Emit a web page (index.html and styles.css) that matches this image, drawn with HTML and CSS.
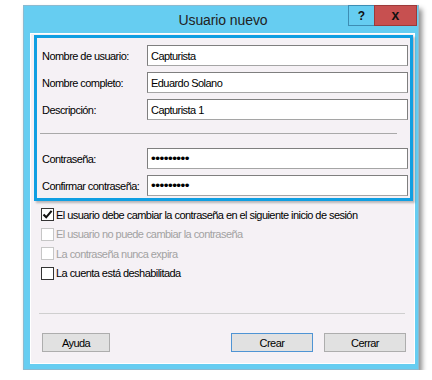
FILE: index.html
```html
<!DOCTYPE html>
<html lang="es">
  <head>
    <meta charset="utf-8">
    <title>Usuario nuevo</title>
    <link rel="stylesheet" href="styles.css">
  </head>
  <body>
    <div class="window">
      <div class="titlebar">
        <span class="title">Usuario nuevo</span>
        <div class="controls">
          <span class="ctl help">?</span>
          <span class="ctl close">x</span>
        </div>
      </div>
      <div class="client">
        <div class="userbox">
          <div class="fields">
            <label>Nombre de usuario:</label>
            <input type="text" value="Capturista" readonly>
            <label>Nombre completo:</label>
            <input type="text" value="Eduardo Solano" readonly>
            <label>Descripción:</label>
            <input type="text" value="Capturista 1" readonly>
          </div>
          <div class="divider"></div>
          <div class="fields">
            <label>Contraseña:</label>
            <input class="pass" type="password" value="123456789" readonly>
            <label>Confirmar contraseña:</label>
            <input class="pass" type="password" value="123456789" readonly>
          </div>
        </div>
        <ul class="options">
          <li>
            <span class="box">
              <svg width="11" height="11" viewBox="0 0 11 11"><path d="M1.5 5.5 L4.2 8.3 L9.6 1.8" fill="none" stroke="#111" stroke-width="2.1"/></svg>
            </span>
            El usuario debe cambiar la contraseña en el siguiente inicio de sesión
          </li>
          <li class="disabled"><span class="box"></span>El usuario no puede cambiar la contraseña</li>
          <li class="disabled"><span class="box"></span>La contraseña nunca expira</li>
          <li><span class="box"></span>La cuenta está deshabilitada</li>
        </ul>
        <div class="separator"></div>
        <div class="buttons">
          <button class="btn help-btn">Ayuda</button>
          <span class="spacer"></span>
          <button class="btn default">Crear</button>
          <button class="btn">Cerrar</button>
        </div>
      </div>
    </div>
  </body>
</html>
```

FILE: styles.css
```css
body {
  margin: 0;
  padding: 5px 0 0 23px;
  background: #ffffff;
  font-family: "Liberation Sans", Arial, sans-serif;
  font-size: 11px;
  letter-spacing: -0.55px;
  color: #000;
}

.window {
  box-sizing: border-box;
  width: 396px;
  height: 365px;
  display: flex;
  flex-direction: column;
  background: #66cdf1;
  border: 1px solid #8bbad0;
  box-shadow: 3px 4px 5px rgba(0, 0, 0, 0.45);
}

.titlebar {
  height: 27px;
  display: grid;
}

.title,
.controls {
  grid-area: 1 / 1;
}

.title {
  justify-self: center;
  align-self: center;
  margin-left: 4px;
  font-size: 14px;
  letter-spacing: -0.1px;
  color: #222;
}

.controls {
  justify-self: end;
  align-self: start;
  display: flex;
  margin: -1px 1px 0 0;
}

.ctl {
  box-sizing: border-box;
  height: 21px;
  display: flex;
  align-items: center;
  justify-content: center;
  font-weight: bold;
  letter-spacing: 0;
  color: #111;
}

.help {
  width: 26px;
  font-size: 12px;
  border: 1px solid #3d8db3;
  border-right: none;
}

.close {
  width: 43px;
  font-size: 14px;
  background: #c75050;
  border: 1px solid #9c3a3a;
  padding-bottom: 2px;
}

.client {
  flex: 1;
  margin: 0 3px 5px 6px;
  display: flex;
  flex-direction: column;
  background: #f5f1f5;
  border: 1px solid #ffffff;
  padding-bottom: 11px;
}

.userbox {
  margin: 1px 1px 0 3px;
  padding: 7px 2px 2px 5px;
  border: 3px solid #109fe2;
  box-shadow: 2px 2px 2px rgba(0, 0, 0, 0.25);
}

.fields {
  display: grid;
  grid-template-columns: 105px 1fr;
  row-gap: 6px;
  align-items: center;
}

.fields label {
  padding-top: 1px;
  white-space: nowrap;
}

.fields input {
  box-sizing: border-box;
  height: 21px;
  margin: 0;
  padding: 0 0 0 3px;
  border: 1px solid #7f7f7f;
  border-bottom-color: #a5a5a5;
  background: #fff;
  font: inherit;
  letter-spacing: inherit;
  color: #000;
  outline: none;
}

.fields input.pass {
  font-size: 13.5px;
  letter-spacing: -0.5px;
  padding-left: 3px;
}

.divider {
  height: 1px;
  margin: 13px 11px 14px -2px;
  background: #a9a9a9;
}

.options {
  list-style: none;
  margin: 4px 0 0;
  padding: 0 0 0 10px;
}

.options li {
  height: 19.5px;
  display: flex;
  align-items: center;
  gap: 2px;
  white-space: nowrap;
}

.options li.disabled {
  color: #a2a2a2;
}

.box {
  box-sizing: border-box;
  width: 13px;
  height: 13px;
  display: flex;
  align-items: center;
  justify-content: center;
  border: 1px solid #333;
  background: #fff;
}

.disabled .box {
  border-color: #c6c6c6;
}

.separator {
  height: 1px;
  margin: auto 9px 19px 8px;
  background: #cfcfcf;
}

.buttons {
  display: flex;
  gap: 11px;
  padding: 0 8px 0 11px;
}

.spacer {
  flex: 1;
}

.btn {
  box-sizing: border-box;
  width: 82px;
  height: 19px;
  padding: 0;
  border: 1px solid #adadad;
  background: #e1e1e1;
  font: inherit;
  letter-spacing: inherit;
  color: #000;
}

.help-btn {
  width: 68px;
}

.btn.default {
  border-color: #4f94d4;
}
```
